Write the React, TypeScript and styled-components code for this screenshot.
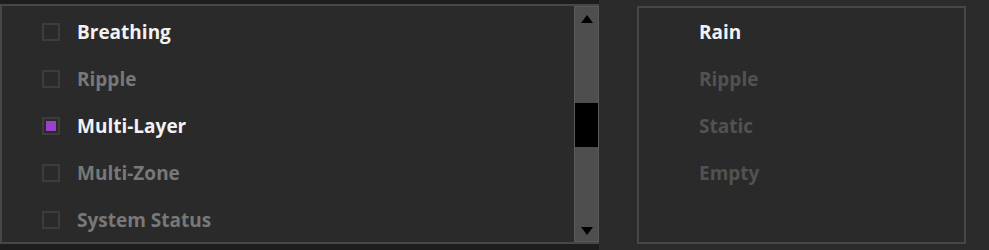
import React from "react";
import styled, { createGlobalStyle } from "styled-components";

const GlobalStyle = createGlobalStyle`
  html, body {
    margin: 0;
    padding: 0;
    background: #2b2b2b;
    font-family: "Open Sans", "Noto Sans", sans-serif;
  }
`;

const Page = styled.div`
  display: flex;
  height: 250px;
  width: 989px;
  overflow: hidden;
`;

const LeftColumn = styled.div`
  width: 599px;
  background: #1d1d1d;
  padding: 4px 0 6px 0;
  box-sizing: border-box;
  display: flex;
`;

const ListBox = styled.div`
  flex: 1;
  display: flex;
  border: 2px solid #474747;
  border-right: none;
  background: #2a2a2a;
`;

const Items = styled.div`
  flex: 1;
  display: flex;
  flex-direction: column;
  padding-top: 2px;
`;

const Row = styled.div<{ $indent: number }>`
  height: 47px;
  flex-shrink: 0;
  display: flex;
  align-items: center;
  padding-left: ${({ $indent }) => $indent}px;
`;

const Box = styled.span<{ $checked: boolean }>`
  width: 18px;
  height: 18px;
  box-sizing: border-box;
  border: 2px solid #3c3c3c;
  padding: 2px;
  margin-right: 17px;
  display: flex;
  &::after {
    content: "";
    flex: 1;
    background: ${({ $checked }) => ($checked ? "#9c3fcc" : "transparent")};
  }
`;

const Label = styled.span<{ $tone: "on" | "off" | "dim" }>`
  font-size: 19px;
  font-weight: 700;
  color: ${({ $tone }) =>
    $tone === "on" ? "#f2f2f2" : $tone === "off" ? "#787878" : "#525252"};
`;

const ScrollBar = styled.div`
  width: 25px;
  background: #4e4e4e;
  border: 1px solid #5a5a5a;
  box-sizing: border-box;
  display: flex;
  flex-direction: column;
  align-items: center;
`;

const Arrow = styled.div<{ $down?: boolean }>`
  width: 0;
  height: 0;
  border-left: 6px solid transparent;
  border-right: 6px solid transparent;
  ${({ $down }) =>
    $down ? "border-top: 8px solid #000;" : "border-bottom: 8px solid #000;"}
  margin: ${({ $down }) => ($down ? "0 0 6px 0" : "8px 0 0 0")};
`;

const Track = styled.div`
  flex: 1;
  align-self: stretch;
  display: flex;
  flex-direction: column;
  padding-top: 80px;
`;

const Thumb = styled.div`
  height: 44px;
  background: #000;
`;

const Spacer = styled.div`
  width: 38px;
`;

const RightPanel = styled.div`
  width: 329px;
  margin: 6px 0 6px 0;
  border: 2px solid #474747;
  background: #2a2a2a;
  box-sizing: border-box;
  display: flex;
  flex-direction: column;
`;

const leftItems = [
  { label: "Breathing", on: true, checked: false },
  { label: "Ripple", on: false, checked: false },
  { label: "Multi-Layer", on: true, checked: true },
  { label: "Multi-Zone", on: false, checked: false },
  { label: "System Status", on: false, checked: false },
];

const rightItems = [
  { label: "Rain", on: true },
  { label: "Ripple", on: false },
  { label: "Static", on: false },
  { label: "Empty", on: false },
];

export default function App() {
  return (
    <>
      <GlobalStyle />
      <Page>
        <LeftColumn>
          <ListBox>
            <Items>
              {leftItems.map((it) => (
                <Row key={it.label} $indent={40}>
                  <Box $checked={it.checked} />
                  <Label $tone={it.on ? "on" : "off"}>{it.label}</Label>
                </Row>
              ))}
            </Items>
            <ScrollBar>
              <Arrow />
              <Track>
                <Thumb />
              </Track>
              <Arrow $down />
            </ScrollBar>
          </ListBox>
        </LeftColumn>
        <Spacer />
        <RightPanel>
          {rightItems.map((it) => (
            <Row key={it.label} $indent={60}>
              <Label $tone={it.on ? "on" : "dim"}>{it.label}</Label>
            </Row>
          ))}
        </RightPanel>
      </Page>
    </>
  );
}
